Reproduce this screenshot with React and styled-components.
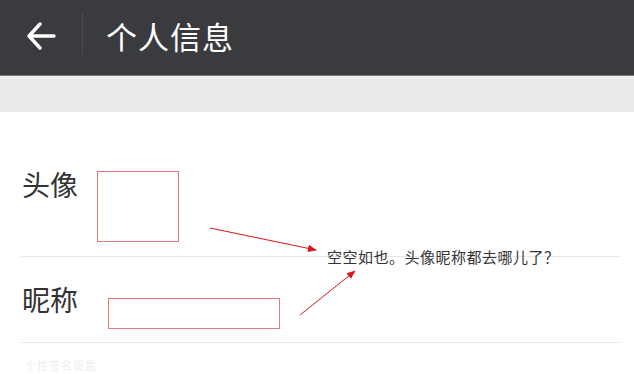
import React from "react";
import styled, { createGlobalStyle } from "styled-components";

const GlobalStyle = createGlobalStyle`
  html, body {
    margin: 0;
    padding: 0;
    background: #ffffff;
    overflow: hidden;
  }
  body {
    font-family: "Noto Sans CJK SC", "Noto Sans", sans-serif;
  }
`;

/** Page wrapper */
const Page = styled.div`
  position: relative;
  width: 634px;
  height: 374px;
  overflow: hidden;
  background: #fff;
`;

/** Top dark header bar */
const Header = styled.header`
  display: flex;
  align-items: center;
  height: 76px;
  background: #3a3b3e;
  border-bottom: 1px solid #7a7b7e;
  box-sizing: border-box;
`;

const BackButton = styled.button`
  display: flex;
  align-items: center;
  justify-content: center;
  width: 82px;
  height: 100%;
  padding: 0;
  border: none;
  background: transparent;
  margin-top: -4px;
`;

const Divider = styled.span`
  width: 1px;
  height: 42px;
  background: #4c4d50;
  margin-top: -8px;
`;

const Title = styled.h1`
  margin: -5px 0 0 23px;
  font-size: 31px;
  font-weight: 400;
  color: #ffffff;
  letter-spacing: 1px;
`;

/** Grey spacer band below the header */
const Band = styled.div`
  height: 36px;
  background: #ebebeb;
`;

const List = styled.div`
  display: flex;
  flex-direction: column;
`;

const Row = styled.div`
  display: flex;
  align-items: flex-start;
  margin: 0 14px 0 21px;
  padding: ${({ $pad }) => $pad};
  border-bottom: ${({ $last }) => ($last ? "none" : "1px solid #e6e6e6")};
`;

const Label = styled.span`
  width: 56px;
  padding-left: 1px;
  font-size: 28px;
  line-height: 30px;
  color: #333333;
`;

const Placeholder = styled.div`
  box-sizing: border-box;
  width: ${({ $w }) => $w}px;
  height: ${({ $h }) => $h}px;
  margin: ${({ $m }) => $m};
  border: 1px solid #e07a7a;
`;

const FaintLabel = styled.span`
  font-size: 11px;
  line-height: 12px;
  color: #eeeeee;
  padding: 16px 0 0 4px;
  letter-spacing: 1px;
`;

/** Annotation overlay: note text and red arrows */
const Note = styled.span`
  position: absolute;
  left: 327px;
  top: 249px;
  font-size: 15px;
  line-height: 16px;
  letter-spacing: 0.5px;
  color: #333333;
  white-space: nowrap;
`;

const Arrows = styled.svg`
  position: absolute;
  left: 0;
  top: 0;
  pointer-events: none;
`;

export default function App() {
  return (
    <>
      <GlobalStyle />
      <Page>
        <Header>
          <BackButton aria-label="返回">
            <svg width="30" height="28" viewBox="0 0 30 28" fill="none">
              <path
                d="M28 14H3M14 2L3 14l11 12"
                stroke="#ffffff"
                strokeWidth="3.4"
                strokeLinecap="round"
                strokeLinejoin="round"
              />
            </svg>
          </BackButton>
          <Divider />
          <Title>个人信息</Title>
        </Header>
        <Band />
        <List>
          <Row $pad="57px 0 14px">
            <Label>头像</Label>
            <Placeholder $w={82} $h={71} $m="2px 0 0 19px" />
          </Row>
          <Row $pad="27px 0 13px">
            <Label>昵称</Label>
            <Placeholder $w={172} $h={31} $m="14px 0 0 30px" />
          </Row>
          <Row $pad="0" $last>
            <FaintLabel>个性签名设置</FaintLabel>
          </Row>
        </List>

        <Arrows width="634" height="374" viewBox="0 0 634 374">
          <defs>
            <marker
              id="head"
              viewBox="0 0 10 10"
              refX="9"
              refY="5"
              markerWidth="9"
              markerHeight="9"
              markerUnits="userSpaceOnUse"
              orient="auto"
            >
              <path d="M0 1L10 5L0 9z" fill="#d9141c" />
            </marker>
          </defs>
          <line x1="210" y1="228" x2="316" y2="250" stroke="#d9141c" strokeWidth="1" markerEnd="url(#head)" />
          <line x1="300" y1="315" x2="355" y2="271" stroke="#d9141c" strokeWidth="1" markerEnd="url(#head)" />
        </Arrows>
        <Note>空空如也。头像昵称都去哪儿了？</Note>
      </Page>
    </>
  );
}
